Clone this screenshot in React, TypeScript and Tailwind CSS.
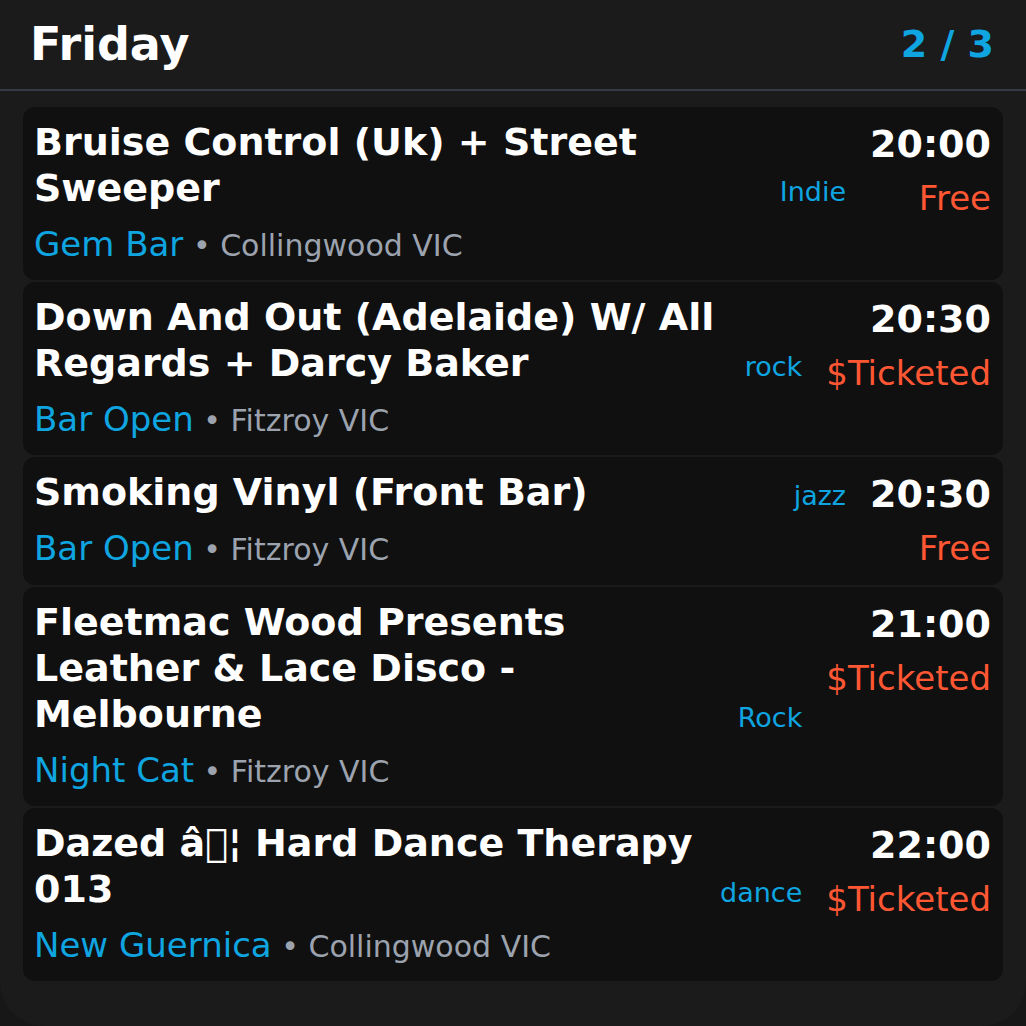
import React from "react";

const events = [
  {
    title: "Bruise Control (Uk) + Street Sweeper",
    venue: "Gem Bar",
    location: "Collingwood VIC",
    genre: "Indie",
    time: "20:00",
    price: "Free",
  },
  {
    title: "Down And Out (Adelaide) W/ All Regards + Darcy Baker",
    venue: "Bar Open",
    location: "Fitzroy VIC",
    genre: "rock",
    time: "20:30",
    price: "$Ticketed",
  },
  {
    title: "Smoking Vinyl (Front Bar)",
    venue: "Bar Open",
    location: "Fitzroy VIC",
    genre: "jazz",
    time: "20:30",
    price: "Free",
  },
  {
    title: "Fleetmac Wood Presents Leather & Lace Disco - Melbourne",
    venue: "Night Cat",
    location: "Fitzroy VIC",
    genre: "Rock",
    time: "21:00",
    price: "$Ticketed",
  },
  {
    title: "Dazed \u00e2\uE000\u00a6 Hard Dance Therapy 013",
    venue: "New Guernica",
    location: "Collingwood VIC",
    genre: "dance",
    time: "22:00",
    price: "$Ticketed",
  },
];

export default function App() {
  return (
    <div className="h-[1026px] w-[1026px] bg-[#171717] font-['DejaVu_Sans',sans-serif]">
      <div className="flex h-full flex-col overflow-hidden rounded-b-[44px] bg-[#1b1b1b]">
        <div className="flex h-[91px] shrink-0 items-center justify-between border-b-2 border-[#353a44] pl-[30px] pr-8">
          <span className="text-[46px] font-bold text-white">Friday</span>
          <span className="text-[38px] font-bold text-[#0ea5e0]">2 / 3</span>
        </div>
        <ul className="flex flex-col gap-0.5 px-[23px] pt-4">
          {events.map((ev, i) => (
            <li key={i} className="flex gap-6 rounded-xl bg-[#101010] py-3 pl-[11px] pr-3">
              <div className="flex min-w-0 flex-1 flex-col">
                <div className="flex gap-6 [align-items:last_baseline]">
                  <div className="flex-1 text-[38px] font-bold leading-[46px] text-white">
                    {ev.title}
                  </div>
                  <div className="text-[27px] leading-[34px] text-[#0ea5e0]">{ev.genre}</div>
                </div>
                <div className="mt-[9px] text-[34px] leading-[48px]">
                  <span className="text-[#0ea5e0]">{ev.venue}</span>
                  <span className="text-[30px] leading-none text-[#9ca3af]"> • {ev.location}</span>
                </div>
              </div>
              <div className="flex flex-col items-end">
                <div className="text-[38px] font-bold leading-[50px] text-white">{ev.time}</div>
                <div className="mt-1 text-[34px] leading-[50px] text-[#ff5733]">{ev.price}</div>
              </div>
            </li>
          ))}
        </ul>
      </div>
    </div>
  );
}
